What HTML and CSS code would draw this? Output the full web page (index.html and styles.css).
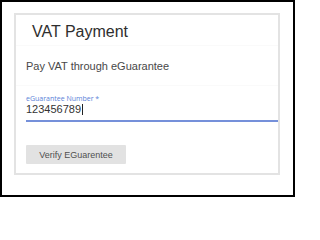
FILE: index.html
```html
<!DOCTYPE html>
<html>
<head>
<meta charset="utf-8">
<link rel="stylesheet" href="styles.css">
</head>
<body>
<div class="frame">
  <div class="card">
    <div class="card-header">VAT Payment</div>
    <div class="card-intro">Pay VAT through eGuarantee</div>
    <div class="card-form">
      <label class="field-label">eGuarantee Number *</label>
      <div class="field-input"><span class="value">123456789</span><span class="caret"></span></div>
      <button class="btn">Verify EGuarentee</button>
    </div>
  </div>
</div>
</body>
</html>
```
FILE: styles.css
```css
html, body {
  margin: 0;
  padding: 0;
  background: #ffffff;
}
.frame {
  box-sizing: border-box;
  width: 295px;
  height: 197px;
  border: 2px solid #000;
  padding: 11px 0 0 12px;
}
.card {
  box-sizing: border-box;
  width: 266px;
  border: 2px solid #e3e3e3;
  font-family: "Liberation Sans", Arial, sans-serif;
}
.card-header {
  box-sizing: border-box;
  height: 31px;
  padding: 7px 0 0 16px;
  font-size: 16px;
  line-height: 20px;
  color: #2e2e2e;
  border-bottom: 1px solid #fafafa;
}
.card-intro {
  box-sizing: border-box;
  height: 40px;
  padding: 13px 0 0 10px;
  font-size: 11px;
  line-height: 14px;
  color: #484848;
  border-bottom: 1px solid #fafafa;
}
.card-form {
  padding: 9px 0 9px 10px;
  display: flex;
  flex-direction: column;
  align-items: flex-start;
}
.field-label {
  font-family: "Open Sans", sans-serif;
  font-size: 7px;
  line-height: 8px;
  color: #5a82d8;
}
.field-input {
  align-self: stretch;
  display: flex;
  align-items: center;
  height: 13px;
  padding-bottom: 4px;
  border-bottom: 2px solid #7590da;
  font-size: 11px;
  line-height: 13px;
  color: #333;
}
.caret {
  width: 1px;
  height: 11px;
  background: #222;
  margin-left: 1px;
}
.btn {
  margin-top: 23px;
  width: 100px;
  height: 19px;
  padding: 0;
  border: none;
  border-radius: 1px;
  background: #e2e2e2;
  color: #505050;
  font-family: "Liberation Sans", Arial, sans-serif;
  font-size: 9px;
  display: flex;
  align-items: center;
  justify-content: center;
}
```
